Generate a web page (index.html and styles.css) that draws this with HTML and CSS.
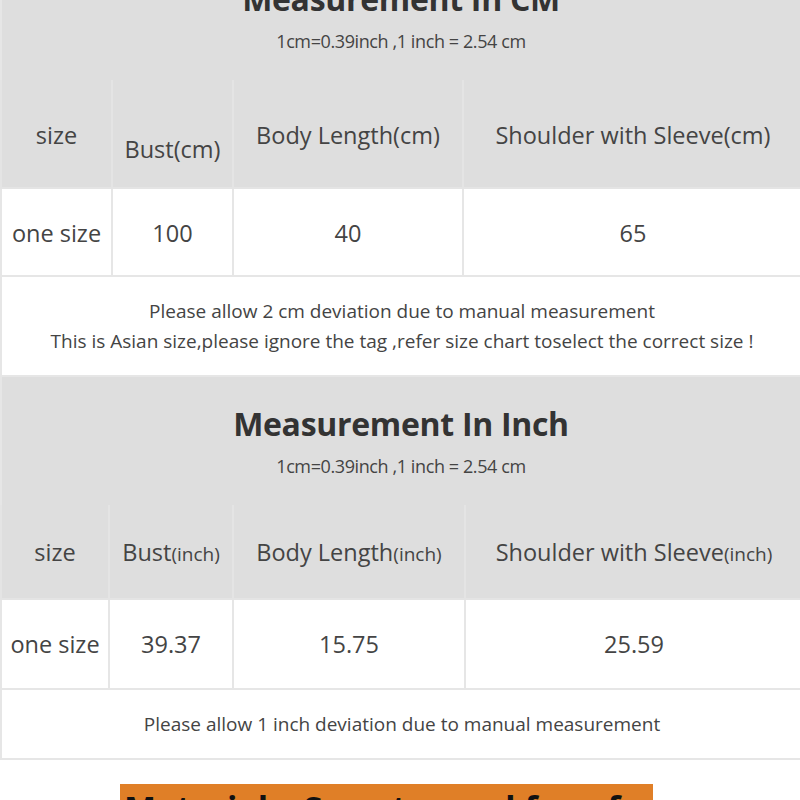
FILE: index.html
```html
<!DOCTYPE html>
<html>
<head>
<meta charset="utf-8">
<link rel="stylesheet" href="styles.css">
</head>
<body>
<div class="page">
  <section class="chart chart-cm">
    <div class="chart-head">
      <h2 class="chart-title">Measurement In CM</h2>
      <p class="chart-sub">1cm=0.39inch ,1 inch = 2.54 cm</p>
    </div>
    <table class="grid">
      <colgroup><col class="c1a"><col class="c2a"><col class="c3a"><col class="c4a"></colgroup>
      <tr class="row-head row-head-cm">
        <td>size</td>
        <td class="low">Bust(cm)</td>
        <td>Body Length(cm)</td>
        <td>Shoulder with Sleeve(cm)</td>
      </tr>
      <tr class="row-data row-data-cm">
        <td>one size</td>
        <td>100</td>
        <td>40</td>
        <td>65</td>
      </tr>
      <tr class="row-note row-note-cm">
        <td colspan="4">
          <p>Please allow 2 cm deviation due to manual measurement</p>
          <p>This is Asian size,please ignore the tag ,refer size chart toselect the correct size !</p>
        </td>
      </tr>
    </table>
  </section>

  <section class="chart chart-inch">
    <div class="chart-head">
      <h2 class="chart-title">Measurement In Inch</h2>
      <p class="chart-sub">1cm=0.39inch ,1 inch = 2.54 cm</p>
    </div>
    <table class="grid">
      <colgroup><col class="c1b"><col class="c2b"><col class="c3b"><col class="c4b"></colgroup>
      <tr class="row-head row-head-inch">
        <td>size</td>
        <td>Bust<span class="unit">(inch)</span></td>
        <td>Body Length<span class="unit">(inch)</span></td>
        <td>Shoulder with Sleeve<span class="unit">(inch)</span></td>
      </tr>
      <tr class="row-data row-data-inch">
        <td>one size</td>
        <td>39.37</td>
        <td>15.75</td>
        <td>25.59</td>
      </tr>
      <tr class="row-note row-note-inch">
        <td colspan="4">
          <p>Please allow 1 inch deviation due to manual measurement</p>
        </td>
      </tr>
    </table>
  </section>

  <div class="banner-wrap">
    <div class="banner">Materials: Sweater and four-faced</div>
  </div>
</div>
</body>
</html>
```

FILE: styles.css
```css
html, body {
  margin: 0;
  padding: 0;
  background: #ffffff;
}

.page {
  width: 800px;
  overflow: hidden;
  font-family: "Open Sans", "Noto Sans", sans-serif;
  color: #444444;
}

.chart-cm {
  margin-top: -48px;
}

.chart-head {
  background: #dedede;
  height: 128px;
  box-sizing: border-box;
  border-left: 2px solid #e6e6e6;
  display: flex;
  flex-direction: column;
  align-items: center;
  padding-top: 26px;
}

.chart-title {
  margin: 0;
  font-family: "Open Sans", sans-serif;
  font-weight: 700;
  font-size: 32px;
  line-height: 42px;
  letter-spacing: -0.3px;
  color: #333333;
}

.chart-sub {
  margin: 0;
  margin-top: 10px;
  font-family: "Open Sans", sans-serif;
  font-size: 18px;
  line-height: 22px;
  letter-spacing: -0.4px;
  color: #444444;
}

.grid {
  width: 802px;
  border-collapse: collapse;
  table-layout: fixed;
}

.grid td {
  border: 2px solid #e6e6e6;
  text-align: center;
  padding: 0;
}

.c1a { width: 111px; }
.c2a { width: 121px; }
.c3a { width: 230px; }
.c4a { width: 340px; }

.c1b { width: 108px; }
.c2b { width: 124px; }
.c3b { width: 232px; }
.c4b { width: 338px; }

.row-head td {
  background: #dedede;
  font-size: 23.5px;
  color: #444444;
  border-color: #e4e4e4;
  border-top: none;
}

.row-head-cm { height: 108px; }
.row-head-cm td { padding-top: 2px; }
.row-head-cm td.low { padding-top: 30px; }

.row-head-inch { height: 94px; }

.unit {
  font-size: 19px;
}

.row-data td {
  background: #ffffff;
  font-size: 23.5px;
  color: #444444;
}

.row-data-cm td { padding-top: 2px; }
.row-data-cm { height: 88px; }
.row-data-inch { height: 90px; }

.row-note td {
  background: #ffffff;
  font-size: 19px;
  color: #444444;
}

.row-note p {
  margin: 0;
  line-height: 30px;
}

.row-note-cm { height: 100px; }
.row-note-inch { height: 70px; }

.banner-wrap {
  padding-top: 24px;
  padding-left: 120px;
}

.banner {
  width: 533px;
  height: 40px;
  background: #e07f27;
  color: #111111;
  font-family: "Open Sans", sans-serif;
  font-weight: 700;
  font-size: 34px;
  line-height: 48px;
  padding-left: 4px;
  box-sizing: border-box;
  white-space: nowrap;
  overflow: hidden;
}
```
